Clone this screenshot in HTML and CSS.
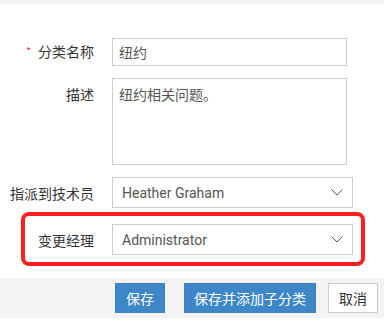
FILE: index.html
```html
<!DOCTYPE html>
<html lang="zh-CN">
<head>
<meta charset="utf-8">
<link rel="stylesheet" href="styles.css">
</head>
<body>
<div class="topbar"></div>
<div class="form">
  <div class="row row-name">
    <div class="label"><span class="req">*</span>分类名称</div>
    <div class="input">纽约</div>
  </div>
  <div class="row row-desc">
    <div class="label label-top">描述</div>
    <div class="textarea">纽约相关问题。</div>
  </div>
  <div class="row row-tech">
    <div class="label">指派到技术员</div>
    <div class="select"><span>Heather Graham</span>
      <svg class="chev" width="12" height="7" viewBox="0 0 12 7"><polyline points="0.5,0.5 6,6 11.5,0.5" fill="none" stroke="#555" stroke-width="1"/></svg>
    </div>
  </div>
  <div class="highlight">
    <div class="row row-mgr">
      <div class="label label-in">变更经理</div>
      <div class="select"><span>Administrator</span>
        <svg class="chev" width="12" height="7" viewBox="0 0 12 7"><polyline points="0.5,0.5 6,6 11.5,0.5" fill="none" stroke="#555" stroke-width="1"/></svg>
      </div>
    </div>
  </div>
</div>
<div class="footer">
  <button class="btn btn-primary btn-save">保存</button>
  <button class="btn btn-primary btn-add">保存并添加子分类</button>
  <button class="btn btn-cancel">取消</button>
</div>
</body>
</html>
```
FILE: styles.css
```css
* { box-sizing: border-box; }
html, body { margin: 0; padding: 0; }
body {
  width: 384px;
  height: 335px;
  background: #fff;
  font-family: "Noto Sans CJK SC", "Noto Sans", sans-serif;
  font-size: 14px;
  color: #333;
  overflow: hidden;
}
.topbar { height: 4px; background: #f3f3f3; }
.form { padding-top: 34px; }
.row { display: flex; align-items: center; }
.label {
  width: 94px;
  margin-right: 18px;
  text-align: right;
  line-height: 20px;
  white-space: nowrap;
  color: #333;
}
.label-top { align-self: flex-start; margin-top: 6px; }
.req { color: #f5222d; font-size: 10px; margin-right: 7px; position: relative; top: -2px; }
.input {
  width: 235px;
  height: 28px;
  border: 1px solid #ccc;
  padding: 0 6px;
  line-height: 26px;
  color: #555;
}
.row-desc { margin-top: 12px; align-items: flex-start; }
.textarea {
  width: 235px;
  height: 87px;
  border: 1px solid #ccc;
  padding: 5px 6px;
  line-height: 20px;
  color: #555;
}
.row-tech { margin-top: 12px; }
.select {
  width: 241px;
  height: 31px;
  border: 1px solid #ccc;
  display: flex;
  align-items: center;
  justify-content: space-between;
  padding: 0 9px 0 9px;
  font-family: Roboto, "Noto Sans", sans-serif;
  font-size: 14px;
  color: #555;
}
.chev { display: block; }
.highlight {
  margin: 4px 0 0 21px;
  width: 344px;
  border: 4px solid #ff1f1f;
  border-radius: 8px;
  padding: 8px 0 7px 0;
}
.label-in { width: 69px; }
.footer {
  margin-top: 12px;
  height: 40px;
  background: #f3f3f3;
  display: flex;
  justify-content: flex-end;
  align-items: center;
  padding-right: 6px;
}
.btn {
  height: 30px;
  font-family: "Noto Sans CJK SC", sans-serif;
  font-size: 14px;
  padding: 0;
  border: 1px solid transparent;
  line-height: 28px;
  cursor: pointer;
}
.btn-primary { background: #3d87c8; color: #fff; border-color: #3a82c2; }
.btn-save { width: 50px; margin-right: 19px; }
.btn-add { width: 132px; margin-right: 12px; }
.btn-cancel { width: 50px; background: #fff; border-color: #ccc; color: #333; }
```
